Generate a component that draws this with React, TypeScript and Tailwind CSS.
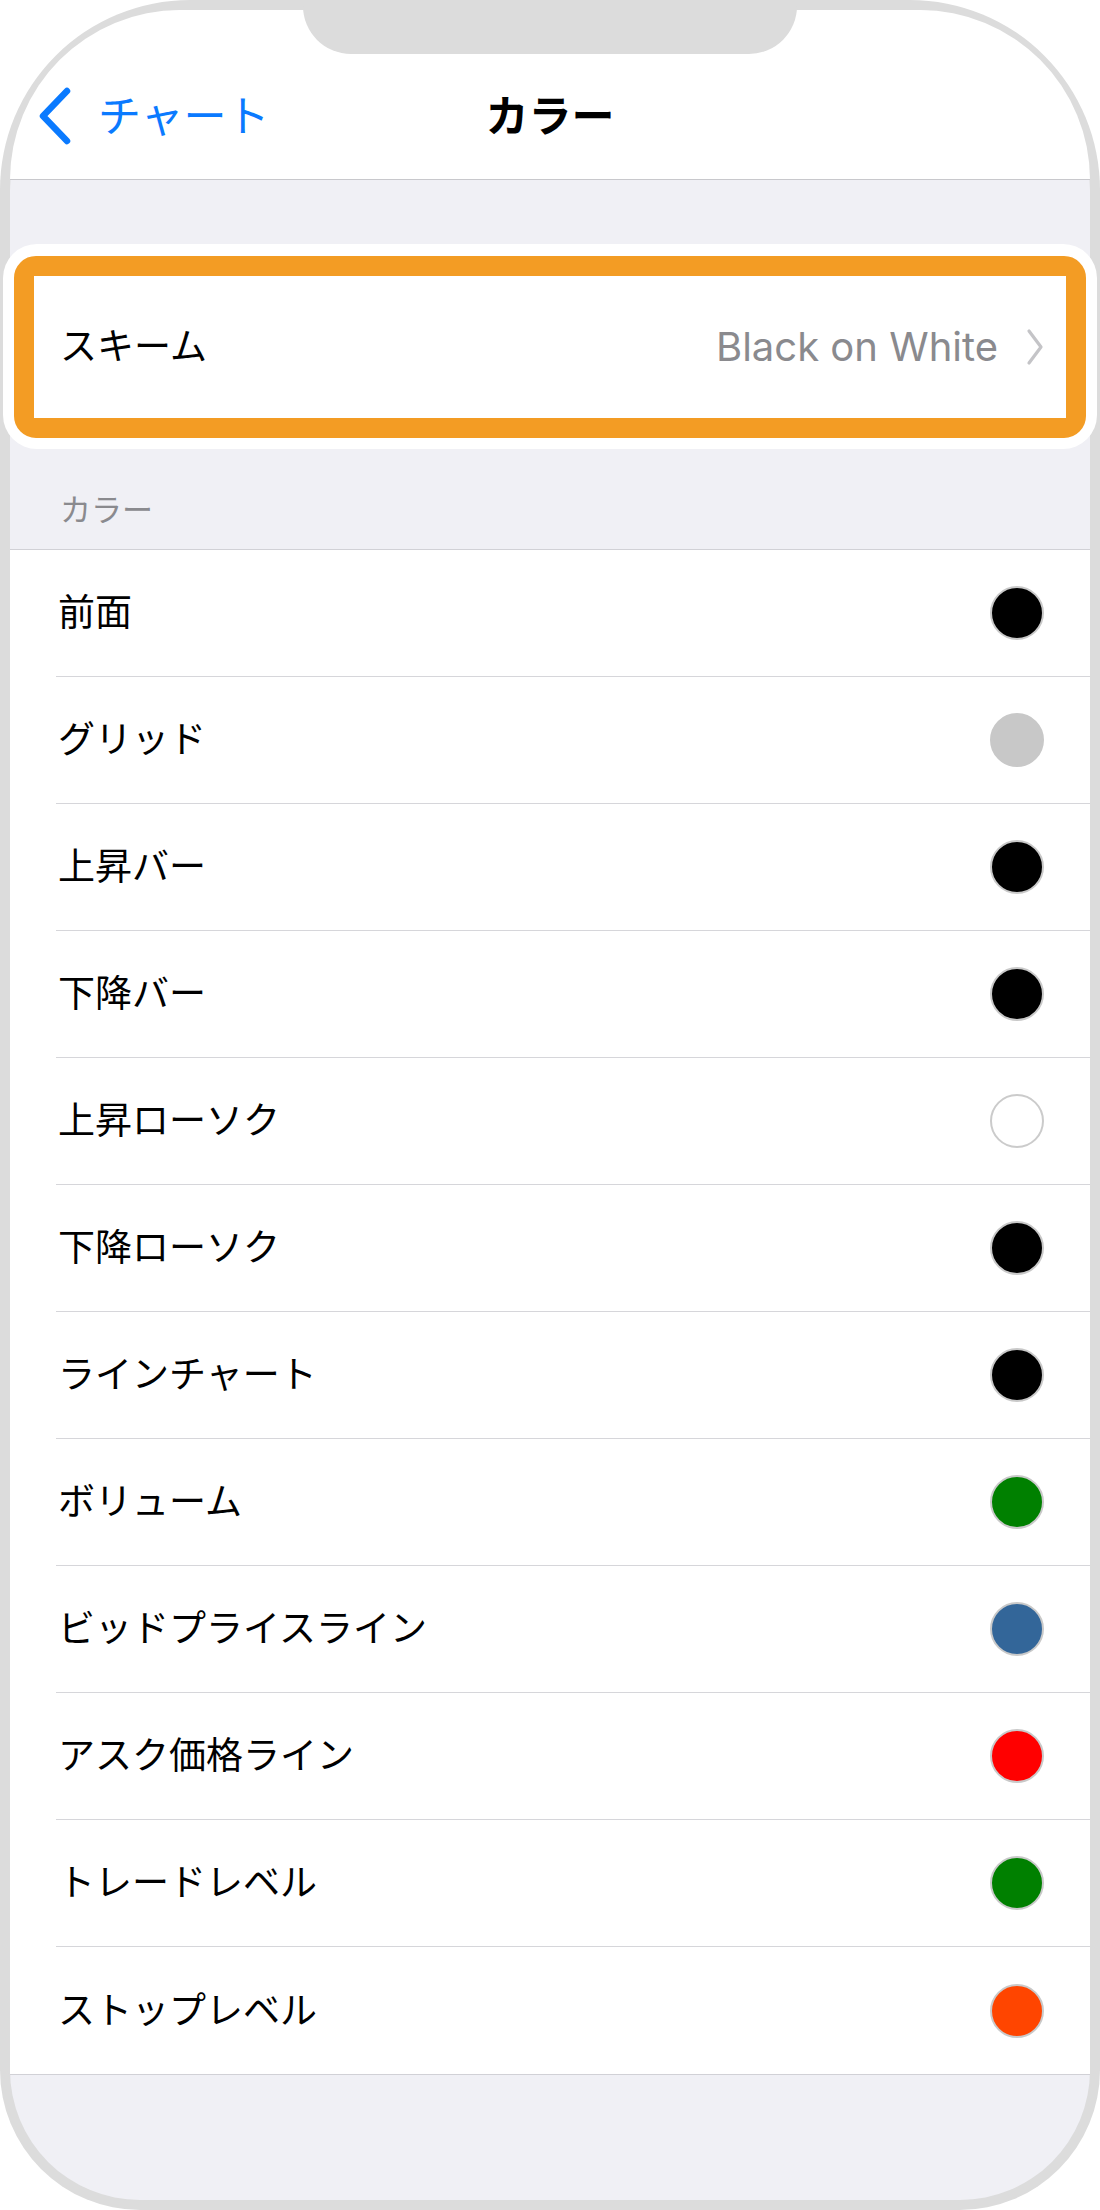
// 色設定画面 — iPhone フレーム内の設定リスト
const JP = "font-['Inter','Noto_Sans_CJK_JP',sans-serif]";

const COLORS = [
  { label: "前面", color: "bg-black", ring: "border-[#c9c9c9]" },
  { label: "グリッド", color: "bg-[#c8c8c8]", ring: "border-[#c8c8c8]" },
  { label: "上昇バー", color: "bg-black", ring: "border-[#c9c9c9]" },
  { label: "下降バー", color: "bg-black", ring: "border-[#c9c9c9]" },
  { label: "上昇ローソク", color: "bg-white", ring: "border-[#cbcbcb]" },
  { label: "下降ローソク", color: "bg-black", ring: "border-[#c9c9c9]" },
  { label: "ラインチャート", color: "bg-black", ring: "border-[#c9c9c9]" },
  { label: "ボリューム", color: "bg-[#008000]", ring: "border-[#c9c9c9]" },
  { label: "ビッドプライスライン", color: "bg-[#336699]", ring: "border-[#c9c9c9]" },
  { label: "アスク価格ライン", color: "bg-[#ff0000]", ring: "border-[#c9c9c9]" },
  { label: "トレードレベル", color: "bg-[#008000]", ring: "border-[#c9c9c9]" },
  { label: "ストップレベル", color: "bg-[#ff4500]", ring: "border-[#c9c9c9]" },
];

function BackChevron() {
  return (
    <svg width="36" height="58" viewBox="0 0 36 58" fill="none">
      <path d="M30 4 L6 29 L30 54" stroke="#0a7aff" strokeWidth="6.5" strokeLinecap="round" strokeLinejoin="round" />
    </svg>
  );
}

function Disclosure() {
  return (
    <svg width="18" height="38" viewBox="0 0 18 38" fill="none">
      <path d="M3 3 L15 19 L3 35" stroke="#c4c4c7" strokeWidth="3.2" strokeLinecap="round" strokeLinejoin="round" />
    </svg>
  );
}

export default function App() {
  return (
    <div className={`w-[1100px] h-[2210px] bg-white ${JP}`}>
      {/* 端末フレーム */}
      <div className="relative h-full bg-[#dcdcdc] rounded-t-[190px] rounded-b-[140px] p-[10px]">
        <div className="flex flex-col h-full bg-[#f0f0f5] rounded-t-[180px] rounded-b-[130px]">
          {/* ナビゲーションバー */}
          <div className="bg-white rounded-t-[180px] h-[170px] pt-[76px] border-b border-[#c8c8cc]">
            <div className="grid grid-cols-[1fr_auto_1fr] items-center h-[60px]">
              <div className="flex items-center pl-[27px] gap-[25px]">
                <BackChevron />
                <span className="text-[43px] leading-none text-[#0a7aff]">チャート</span>
              </div>
              <span className="text-[43px] leading-none font-bold text-black">カラー</span>
              <div />
            </div>
          </div>

          {/* スキーム（強調表示） */}
          <div className="mt-[64px] -mx-[7px] bg-white rounded-[34px] px-[11px] pt-[12px] pb-[11px]">
            <div className="border-[20px] border-[#f39c24] rounded-[22px]">
              <div className="flex items-center h-[142px] bg-white pl-[26px] pr-[22px]">
                <span className="text-[37px] text-black">スキーム</span>
                <span className="ml-auto text-[40px] text-[#8a8a8e] font-['Inter',sans-serif]">Black on White</span>
                <span className="ml-[28px] flex"><Disclosure /></span>
              </div>
            </div>
          </div>

          {/* セクション見出し */}
          <div className="h-[100px] pl-[50px] pt-[41px]">
            <span className="text-[31px] leading-[40px] text-[#8a8a8e]">カラー</span>
          </div>

          {/* カラー一覧 */}
          <div className="bg-white border-y border-[#d1d1d6]">
            {COLORS.map((c, i) => (
              <div key={c.label} className="pl-[46px] h-[127px]">
                <div
                  className={`flex items-center h-full pl-[2px] pr-[46px] ${
                    i < COLORS.length - 1 ? "border-b border-[#d6d6da]" : ""
                  }`}
                >
                  <span className="text-[37px] text-black">{c.label}</span>
                  <span className={`ml-auto w-[54px] h-[54px] rounded-full border-[2px] ${c.ring} ${c.color}`} />
                </div>
              </div>
            ))}
          </div>
        </div>

        {/* ノッチ */}
        <div className="absolute top-0 left-[303px] w-[494px] h-[54px] bg-[#dcdcdc] rounded-b-[48px]" />
      </div>
    </div>
  );
}
